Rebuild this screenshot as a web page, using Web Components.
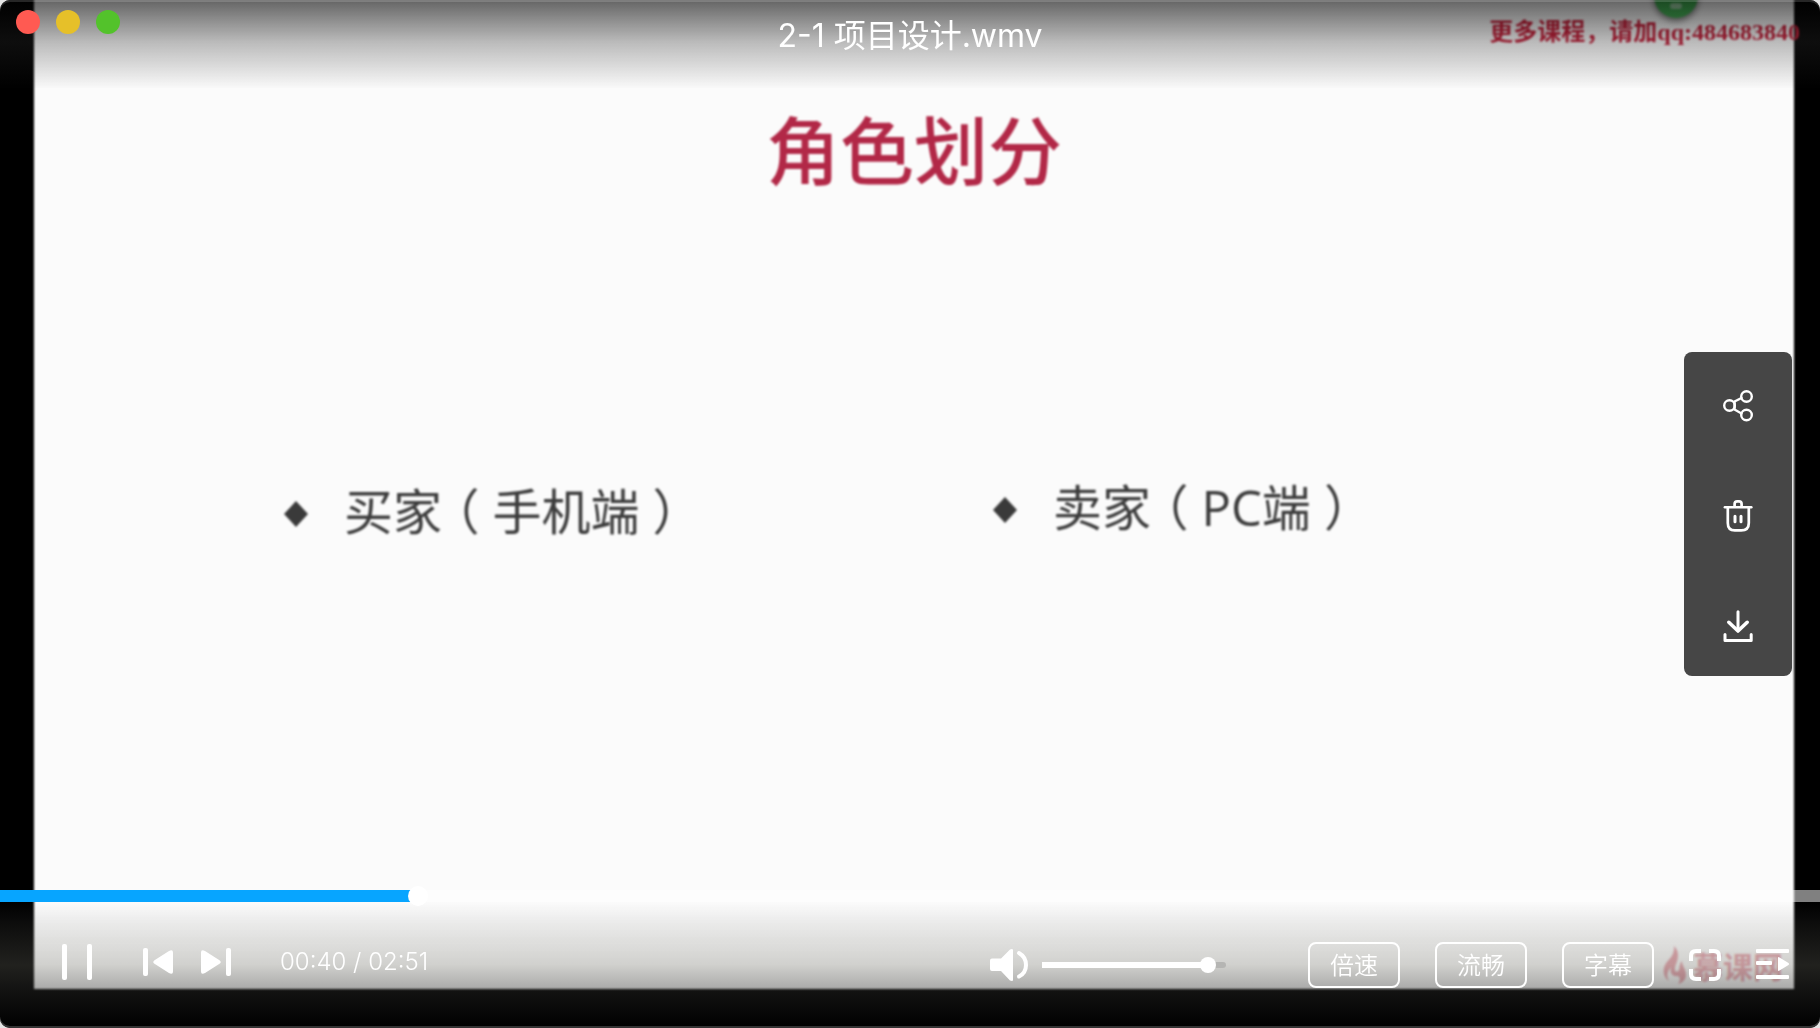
<!DOCTYPE html>
<html lang="zh-CN">
<head>
<meta charset="utf-8">
<title>2-1 项目设计.wmv</title>
<style>
html,body{margin:0;height:100%;background:#e4e4e4}
body{font-family:Inter,"Noto Sans CJK SC",sans-serif;overflow:hidden}
</style>
</head>
<body>
<video-player>
  <lesson-slide slot="picture" heading="角色划分"></lesson-slide>
  <title-bar slot="title">2-1 项目设计.wmv</title-bar>
  <side-tools slot="tools"></side-tools>
  <seek-bar slot="seek"></seek-bar>
  <control-bar slot="controls">
    <pill-button>倍速</pill-button>
    <pill-button>流畅</pill-button>
    <pill-button>字幕</pill-button>
  </control-bar>
</video-player>
<script>
function define(name, html){
  customElements.define(name, class extends HTMLElement{
    constructor(){
      super();
      const t=document.createElement('template');
      t.innerHTML='<style>:host,*{box-sizing:border-box}button{appearance:none;background:none;border:0;padding:0;margin:0;color:inherit;font:inherit;cursor:pointer}svg{display:block}</style>'+html;
      this.attachShadow({mode:'open'}).append(t.content.cloneNode(true));
      const h=this.shadowRoot.querySelector('[data-heading]');
      if(h) h.textContent=this.getAttribute('heading');
    }
  });
}

define('video-player',`<style>
:host{display:grid;height:100vh;grid-template:minmax(0,1fr)/minmax(0,1fr);background:#000;border-radius:10px;overflow:hidden;position:relative;color:#fff}
:host::after{content:"";position:absolute;inset:0;border-radius:10px;box-shadow:inset 0 2px rgba(255,255,255,.15),inset 0 -2px rgba(255,255,255,.2);pointer-events:none}
.picture,.chrome{grid-area:1/1;min-width:0;min-height:0}
.picture{display:flex;overflow:hidden}
.chrome{display:flex;flex-direction:column;position:relative}
.space{flex:1}
.tools{position:absolute;inset:0 28px 0 auto;display:flex;align-items:center;pointer-events:none}
.tools ::slotted(*){pointer-events:auto}
</style>
<div class="picture"><slot name="picture"></slot></div>
<div class="chrome"><slot name="title"></slot><div class="space"></div><slot name="seek"></slot><slot name="controls"></slot><div class="tools"><slot name="tools"></slot></div></div>`);

define('lesson-slide',`<style>
:host{display:flex;flex-direction:column;flex:1;position:relative;margin:-6px 26px 39px 34px;padding:6px 0 0;background:#fbfbfb;filter:blur(1px);color:#3c3c3c}
h1{margin:101px 0 0;font:500 74px/92px "Noto Sans CJK SC",sans-serif;color:#b22847;text-align:center}
ul{list-style:none;margin:276px 0 0;padding:0 0 0 250px;display:grid;grid-template-columns:709px 1fr;align-items:start;font-size:49px;line-height:72px;font-family:"Open Sans","Noto Sans CJK SC",sans-serif}
li{display:flex;align-items:center;gap:36px}
li:first-child{padding-top:4px}
li svg{width:24px;height:26px;margin-top:8px}
.p{font-family:"Noto Sans CJK SC",sans-serif;font-feature-settings:"halt";padding:0 13px}
.note{position:absolute;right:-6px;top:22px;font:700 24px/32px "Liberation Serif","Noto Sans CJK SC",serif;color:#c51632;white-space:nowrap}
.ball{position:absolute;right:96px;top:-20px;width:44px;height:44px;border-radius:50%;background:#43b755;box-shadow:0 3px 6px rgba(0,0,0,.5)}
.ball::after{content:"";position:absolute;left:16px;top:29px;width:12px;height:6px;border-radius:3px;background:rgba(255,255,255,.5)}
.brand{position:absolute;right:11px;bottom:2px;display:flex;align-items:center;gap:6px;font:700 30px/44px "Noto Sans CJK SC",sans-serif;color:rgba(205,60,80,.45)}
</style>
<h1 data-heading></h1>
<ul>
<li><svg viewBox="0 0 24 26"><path d="M12 0 24 13 12 26 0 13Z" fill="#3a3a3a"/></svg><span>买家<span class="p">（</span>手机端<span class="p">）</span></span></li>
<li><svg viewBox="0 0 24 26"><path d="M12 0 24 13 12 26 0 13Z" fill="#3a3a3a"/></svg><span>卖家<span class="p">（</span>PC端<span class="p">）</span></span></li>
</ul>
<div class="ball"></div>
<div class="note">更多课程，请加qq:484683840</div>
<div class="brand"><svg width="24" height="38" viewBox="0 0 24 38"><path d="M11 0C18 7 14 15 12 21c-1 5 2 6 4 3 1-3 0-6 3-9 0 5 4 8 4 14 0 5-4 8-8 9 3-4 2-8-1-8-4 1-8-3-6-9-4 5-5 9-2 14C1 32-1 25 2 19 5 13 12 10 11 0Z" fill="currentColor"/></svg><span>慕课网</span></div>`);

define('title-bar',`<style>
:host{display:grid;grid-template-columns:1fr auto 1fr;align-items:start;height:88px;padding:10px 16px 0;background:linear-gradient(rgba(0,0,0,.6),rgba(45,45,45,.31) 48%,rgba(45,45,45,.01))}
.lights{display:flex;gap:16px}
button{width:24px;height:24px;border-radius:50%}
.r{background:#ff5a52}.y{background:#e6c029}.g{background:#53c22b}
h2{margin:0;font-size:32px;line-height:52px;font-weight:400}
</style>
<div class="lights"><button class="r" aria-label="关闭"></button><button class="y" aria-label="最小化"></button><button class="g" aria-label="最大化"></button></div>
<h2><slot></slot></h2>`);

define('side-tools',`<style>
:host{display:flex;flex-direction:column;align-items:center;gap:46px;width:108px;padding:22px 0 18px;background:#464646;border-radius:8px}
button{width:64px;height:64px;display:grid;place-items:center}
svg{fill:none;stroke:#fff;stroke-width:2.4;stroke-linecap:round;stroke-linejoin:round}
</style>
<button aria-label="分享"><svg width="32" height="32" viewBox="0 0 32 32"><circle cx="7.5" cy="15.5" r="5.3"/><circle cx="24.5" cy="6.5" r="5.3"/><circle cx="24.5" cy="25" r="5.3"/><path d="M12.5 11.5 19.5 8M12.5 19.5l7 4M12.6 12.5v6"/></svg></button>
<button aria-label="删除"><svg width="32" height="32" viewBox="0 0 32 32"><path d="M2.8 7.2h26.6"/><path d="M12.6 6.5V4q0-2.6 2.6-2.6h1.8q2.6 0 2.6 2.6v2.5M5.8 8v15q0 7.4 7 7.4h6.4q7.6 0 7.6-7.4V8" stroke-width="2.7"/><path d="M13 16.3v5.4M19 16.3v5.4" stroke-width="3"/></svg></button>
<button aria-label="下载"><svg width="32" height="32" viewBox="0 0 32 32"><path d="M16 1.8v18" stroke-width="3"/><path d="M6.8 12.3 16 21l9.2-8.7" stroke-width="3.6"/><path d="M3 24.5v6h26.2v-6" stroke-width="3"/></svg></button>`);

define('seek-bar',`<style>
:host{display:block;height:12px;position:relative}
input{appearance:none;-webkit-appearance:none;display:block;width:100%;height:12px;margin:0;background:linear-gradient(90deg,#07a5ff 23%,rgba(255,255,255,.5) 23%);outline:0}
input::-webkit-slider-thumb{-webkit-appearance:none;width:20px;height:20px;border-radius:50%;background:#fff}
</style>
<input type="range" min="0" max="171" step="any" value="38.8" aria-label="播放进度">`);

define('pill-button',`<style>
:host{display:block}
button{width:92px;height:46px;padding-top:2px;border:2px solid #fff;border-radius:8px;font-size:24px;line-height:40px;font-weight:350}
</style><button><slot></slot></button>`);

define('control-bar',`<style>
:host{display:flex;align-items:center;height:126px;padding:0 31px 0 62px;background:linear-gradient(rgba(110,110,100,0),rgba(110,110,108,.11) 16%,rgba(110,110,100,.3) 50%,rgba(48,48,46,.4) 69%,rgba(0,0,0,.6))}
svg{fill:#fff}
.left,.volume,.right,.skip{display:flex;align-items:center}
.left{gap:49px;padding-bottom:6px}
.skip{gap:28px}
time{font-size:24px;line-height:32px;font-weight:300;white-space:pre}
.volume{gap:14px;margin-left:auto;margin-right:82px}
.right{gap:35px}
input{appearance:none;-webkit-appearance:none;width:184px;height:6px;margin:0;border-radius:0 3px 3px 0;background:linear-gradient(90deg,#fff 90%,#b5b5b3 90%);outline:0}
input::-webkit-slider-thumb{-webkit-appearance:none;width:16px;height:16px;border-radius:50%;background:#fff}
</style>
<div class="left">
<button aria-label="暂停"><svg width="32" height="36" viewBox="0 0 32 36"><rect width="5" height="36" rx="2"/><rect x="25" width="5" height="36" rx="2"/></svg></button>
<div class="skip">
<button aria-label="上一个"><svg width="30" height="28" viewBox="0 0 30 28"><rect width="5" height="28" rx="2"/><path d="M11.5 12.2 26 3q4-2 4 1.500v19q0 3.500-4 1.500l-14.500-9.200q-2.500-1.800 0-3.600Z"/></svg></button>
<button aria-label="下一个"><svg width="30" height="28" viewBox="0 0 30 28"><rect x="25" width="5" height="28" rx="2"/><path d="M18.500 12.200 4 3Q0 1 0 4.500v19Q0 27 4 25l14.500-9.200q2.500-1.800 0-3.600Z"/></svg></button>
</div>
<time>00:40 / 02:51</time>
</div>
<div class="volume">
<button aria-label="静音"><svg width="38" height="32" viewBox="0 0 38 32"><path d="M2 9.500h9L20 0.500q3-1 3 0.500v30q0 1.500-3 .5l-9-9.500H2q-2 0-2-2v-8.500q0-2 2-2Z"/><path d="M29 4q7 4 7 12t-7 11.500" fill="none" stroke="#fff" stroke-width="4" stroke-linecap="round"/></svg></button>
<input type="range" min="0" max="100" value="94" aria-label="音量">
</div>
<div class="right">
<slot></slot>
<button aria-label="全屏"><svg width="32" height="32" viewBox="0 0 32 32"><path d="M2 12V7q0-5 5-5h5M20 2h5q5 0 5 5v5M30 20v5q0 5-5 5h-5M12 30H7q-5 0-5-5v-5" fill="none" stroke="#fff" stroke-width="4"/></svg></button>
<button aria-label="播放列表"><svg width="33" height="32" viewBox="0 0 33 32"><rect width="33" height="4" rx="1"/><rect y="12" width="16" height="4" rx="1"/><rect y="26" width="33" height="4" rx="1"/><path d="M22 9q0-1.500 1.500-.5L32.500 14q1 1 0 2l-9 5.500q-1.500 1-1.500-.5Z"/></svg></button>
</div>`);
</script>
</body>
</html>
